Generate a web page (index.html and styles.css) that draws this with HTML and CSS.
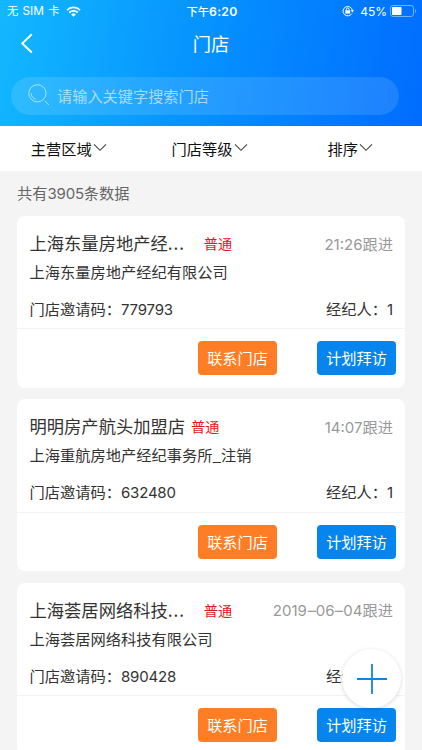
FILE: index.html
```html
<!DOCTYPE html>
<html lang="zh-CN">
<head>
    <meta charset="UTF-8">
    <meta name="viewport" content="width=device-width, initial-scale=1.0">
    <title>门店</title>
    <link rel="stylesheet" href="styles.css">
</head>
<body>

    <div class="header">
        <div class="status-bar">
            <div class="status-left">
                <span>无 <span class="carrier">SIM</span> 卡</span>
                <svg class="wifi" width="15" height="11" viewBox="0 0 15 11">
                    <path d="M1 4.1a9.3 9.3 0 0 1 13 0M3.3 6.5a6 6 0 0 1 8.4 0" fill="none" stroke="#fff" stroke-width="1.8"/>
                    <path d="M7.5 10.8L5.2 8.4a3.3 3.3 0 0 1 4.6 0z" fill="#fff"/>
                </svg>
            </div>
            <div class="status-time">下午<span class="clock">6:20</span></div>
            <div class="status-right">
                <svg class="lock" width="12" height="12" viewBox="0 0 12 12">
                    <path d="M9.8 8.6A4.7 4.7 0 1 1 10.4 5.4" fill="none" stroke="#fff" stroke-width="1"/>
                    <path d="M8.6 5.2h3.4l-1.7 2.3z" fill="#fff"/>
                    <rect x="3.3" y="5.2" width="4.8" height="3.4" fill="#fff"/>
                    <path d="M4.3 5.4V4.4a1.4 1.4 0 0 1 2.8 0v1" fill="none" stroke="#fff" stroke-width=".9"/>
                </svg>
                <span class="percent">45%</span>
                <svg width="27" height="12" viewBox="0 0 27 12">
                    <rect x=".5" y=".5" width="23" height="11" rx="2.5" fill="none" stroke="#fff" stroke-opacity=".45"/>
                    <rect x="2" y="2" width="9.5" height="8" rx=".8" fill="#fff"/>
                    <path d="M25 4v4q1.2-.6 1.2-2T25 4z" fill="#fff" fill-opacity=".45"/>
                </svg>
            </div>
        </div>

        <div class="title-bar">
            <svg class="back" width="13" height="21" viewBox="0 0 13 21">
                <path d="M11.8 1.2L2.3 10.4l9.5 9" fill="none" stroke="#fff" stroke-width="2"/>
            </svg>
            <h1>门店</h1>
        </div>

        <div class="search">
            <svg width="22" height="22" viewBox="0 0 22 22" fill="none" stroke="#fff" stroke-opacity=".6">
                <circle cx="9.4" cy="9.3" r="8.6"/>
                <path d="M3.2 9.2a6.3 6.3 0 0 0 4.6 6M16.6 16.8l4.2 4.2"/>
            </svg>
            <span>请输入关键字搜索门店</span>
        </div>
    </div>

    <div class="filters">
        <div class="filter">主营区域<svg width="14" height="9" viewBox="0 0 14 9"><path d="M1 1.3l6 6 6-6"/></svg></div>
        <div class="filter">门店等级<svg width="14" height="9" viewBox="0 0 14 9"><path d="M1 1.3l6 6 6-6"/></svg></div>
        <div class="filter">排序<svg width="14" height="9" viewBox="0 0 14 9"><path d="M1 1.3l6 6 6-6"/></svg></div>
    </div>

    <div class="count">共有<span class="num">3905</span>条数据</div>

    <div class="list">
        <div class="card">
            <div class="info">
                <div class="row name-row">
                    <h2>上海东量房地产经<span class="dots">...</span></h2>
                    <span class="level level-far">普通</span>
                    <span class="follow"><span class="num">21:26</span>跟进</span>
                </div>
                <div class="company">上海东量房地产经纪有限公司</div>
                <div class="row code-row">
                    <span>门店邀请码：<span class="num">779793</span></span>
                    <span>经纪人：<span class="num">1</span></span>
                </div>
            </div>
            <div class="actions">
                <button class="contact">联系门店</button>
                <button class="visit">计划拜访</button>
            </div>
        </div>

        <div class="card">
            <div class="info">
                <div class="row name-row">
                    <h2>明明房产航头加盟店</h2>
                    <span class="level">普通</span>
                    <span class="follow"><span class="num">14:07</span>跟进</span>
                </div>
                <div class="company">上海重航房地产经纪事务所_注销</div>
                <div class="row code-row">
                    <span>门店邀请码：<span class="num">632480</span></span>
                    <span>经纪人：<span class="num">1</span></span>
                </div>
            </div>
            <div class="actions">
                <button class="contact">联系门店</button>
                <button class="visit">计划拜访</button>
            </div>
        </div>

        <div class="card">
            <div class="info">
                <div class="row name-row">
                    <h2>上海荟居网络科技<span class="dots">...</span></h2>
                    <span class="level level-far">普通</span>
                    <span class="follow"><span class="num">2019<span class="dash">–</span>06<span class="dash">–</span>04</span>跟进</span>
                </div>
                <div class="company">上海荟居网络科技有限公司</div>
                <div class="row code-row">
                    <span>门店邀请码：<span class="num">890428</span></span>
                    <span>经纪人：<span class="num">1</span></span>
                </div>
            </div>
            <div class="actions">
                <button class="contact">联系门店</button>
                <button class="visit">计划拜访</button>
            </div>
        </div>
    </div>

    <!-- Floating add button -->
    <button class="add">
        <svg width="30" height="30" viewBox="0 0 30 30"><path d="M15 0v30M0 15h30" stroke="#1482e0" stroke-width="1.8"/></svg>
    </button>

</body>
</html>
```
FILE: styles.css
```css
* {
    box-sizing: border-box;
}

body {
    margin: 0;
    height: 750px;
    overflow: hidden;
    background-color: #f4f4f4;
    color: #333;
    font-family: "Noto Sans CJK SC", sans-serif;
    font-size: 15.25px;
}

h1,
h2 {
    margin: 0;
    font-weight: 400;
}

.num {
    font-family: Inter, sans-serif;
    font-size: 15px;
    letter-spacing: -0.2px;
}

/* Header */
.header {
    height: 126px;
    background: linear-gradient(100deg, #13b8ff 0%, #0694ff 45%, #006cff 100%);
    color: #fff;
}

.status-bar {
    display: grid;
    grid-template-columns: 1fr auto 1fr;
    align-items: center;
    height: 21px;
    padding: 0 5px 0 7px;
    font-size: 11.3px;
    line-height: 21px;
}

.status-left,
.status-right {
    display: flex;
    align-items: center;
}

.status-left {
    gap: 7px;
    word-spacing: 1.7px;
}

.status-right {
    justify-content: flex-end;
}

.carrier,
.clock,
.percent {
    font-family: Inter, sans-serif;
}

.carrier {
    font-size: 11.8px;
}

.clock {
    font-size: 12.2px;
    font-weight: 600;
    letter-spacing: 0.3px;
}

.status-time {
    font-weight: 500;
}

.lock {
    margin-right: 6px;
}

.percent {
    margin-right: 3px;
    font-size: 12px;
}

.title-bar {
    display: grid;
    grid-template-columns: 1fr auto 1fr;
    align-items: center;
    height: 44px;
    padding: 0 20px;
}

.title-bar h1 {
    font-size: 18.3px;
    line-height: 44px;
}

.search {
    display: flex;
    align-items: center;
    gap: 7px;
    width: 388px;
    height: 38px;
    margin: 12px 0 0 11px;
    padding: 0 0 2px 17px;
    border-radius: 19px;
    background-color: rgba(255, 255, 255, 0.12);
    color: rgba(255, 255, 255, 0.6);
    font-size: 15.2px;
}

/* Filters */
.filters {
    display: flex;
    height: 45px;
    background-color: #fff;
    color: #111;
    line-height: 44px;
}

.filter {
    display: flex;
    flex: 1;
    align-items: center;
    justify-content: center;
    gap: 1px;
    padding: 0 3px 2px 0;
}

.filter svg {
    fill: none;
    stroke: #444;
    stroke-width: 1.1;
}

.count {
    height: 45px;
    padding-left: 17px;
    color: #666;
    line-height: 43px;
}

/* Store cards */
.list {
    display: flex;
    flex-direction: column;
    gap: 11.3px;
    padding: 0 17px;
}

.card {
    height: 172px;
    flex-shrink: 0;
    border-radius: 8px;
    background-color: #fff;
}

.info {
    height: 113.3px;
    padding: 14px 12px 0 12.5px;
    border-bottom: 1px solid #f3f3f3;
}

.row {
    display: flex;
    align-items: center;
    justify-content: space-between;
}

.name-row {
    height: 26px;
}

.name-row h2 {
    font-size: 17.3px;
    line-height: 26px;
}

.dots {
    letter-spacing: 1px;
}

.level {
    margin-left: 6px;
    color: #e8151b;
    font-size: 14.2px;
}

.level-far {
    margin-left: 18.5px;
}

.follow {
    margin-left: auto;
    padding-bottom: 1px;
    color: #999;
}

.follow .num {
    letter-spacing: 0;
}

.dash {
    display: inline-block;
    transform: scaleX(1.1);
    margin: 0 0.7px;
}

.company {
    height: 31px;
    line-height: 31px;
}

.code-row {
    height: 42px;
}

.actions {
    display: flex;
    justify-content: flex-end;
    gap: 40px;
    padding: 12px 9px 0 0;
}

.actions button {
    width: 79px;
    height: 34px;
    padding: 0 0 2px;
    border: none;
    border-radius: 4px;
    color: #fff;
    font-family: inherit;
    font-size: 15.2px;
}

.contact {
    background-color: #ff7d24;
}

.visit {
    background-color: #0785ee;
}

/* Add button */
.add {
    position: fixed;
    right: 21px;
    bottom: 42px;
    display: flex;
    align-items: center;
    justify-content: center;
    width: 59px;
    height: 59px;
    padding: 0;
    border: none;
    border-radius: 50%;
    background-color: #fff;
    box-shadow: 0 1px 4px rgba(0, 0, 0, 0.16);
}
```
